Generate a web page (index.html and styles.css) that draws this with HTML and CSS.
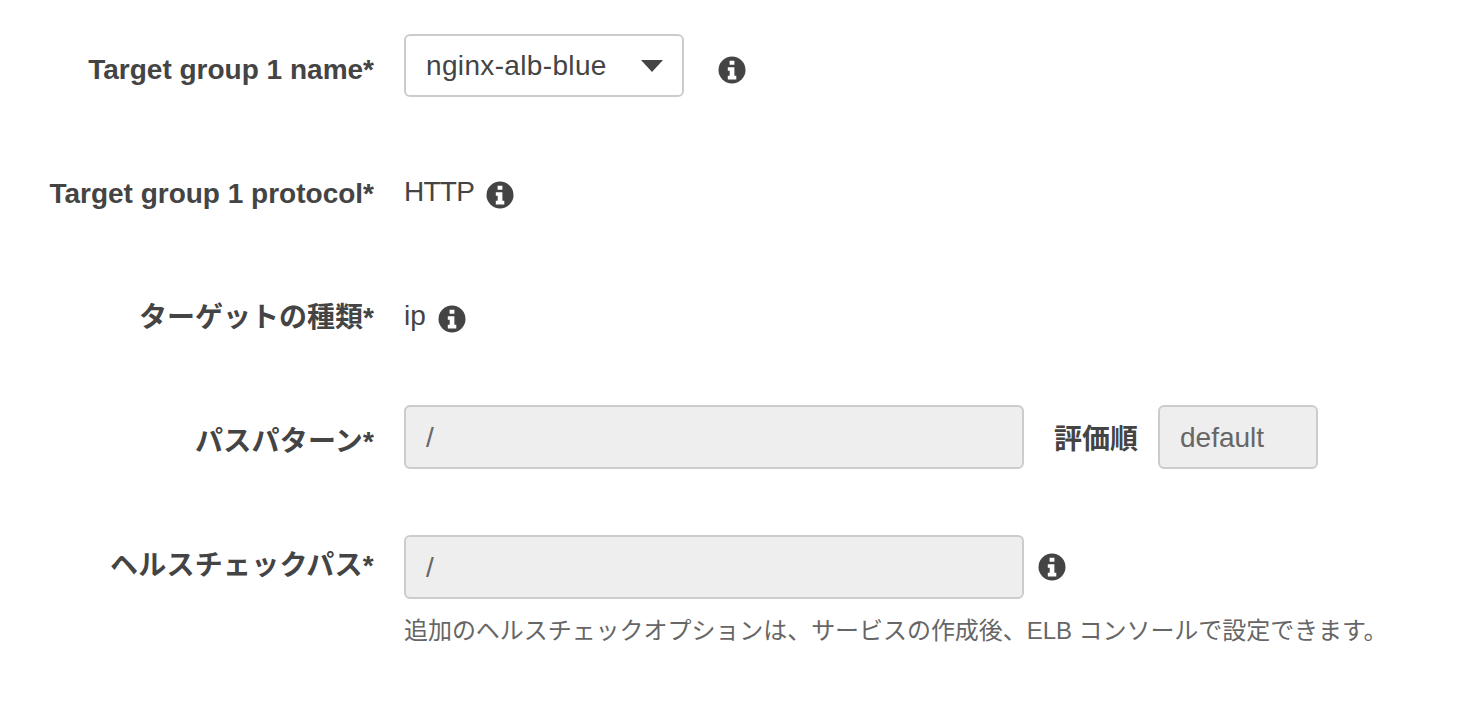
FILE: index.html
```html
<!DOCTYPE html>
<html lang="ja">
<head>
  <meta charset="UTF-8" />
  <title>Target group</title>
  <link rel="stylesheet" href="styles.css">
</head>
<body>
  <svg class="defs" xmlns="http://www.w3.org/2000/svg">
    <symbol id="info" viewBox="0 0 28 28">
      <circle cx="14" cy="14" r="13.5" fill="#444"/>
      <path fill="#fff" d="M11.6 4.8h4.8v4h-4.8z M9.8 11.2h6.6v8.6h1.9v3.6H9.8v-3.6h1.9v-5H9.8z"/>
    </symbol>
  </svg>

  <div class="form">
    <div class="row row-name">
      <label class="label">Target group 1 name*</label>
      <div class="select">
        <span class="select-text">nginx-alb-blue</span>
        <span class="caret"></span>
      </div>
      <svg class="info info-far"><use href="#info"/></svg>
    </div>

    <div class="row row-protocol">
      <label class="label">Target group 1 protocol*</label>
      <span class="value value-http">HTTP</span>
      <svg class="info"><use href="#info"/></svg>
    </div>

    <div class="row row-type">
      <label class="label">ターゲットの種類*</label>
      <span class="value">ip</span>
      <svg class="info"><use href="#info"/></svg>
    </div>

    <div class="row row-path">
      <label class="label">パスパターン*</label>
      <div class="input input-wide">/</div>
      <span class="order-label">評価順</span>
      <div class="input input-small">default</div>
    </div>

    <div class="row row-health">
      <label class="label">ヘルスチェックパス*</label>
      <div class="input input-wide">/</div>
      <svg class="info"><use href="#info"/></svg>
    </div>
    <p class="help">追加のヘルスチェックオプションは、サービスの作成後、ELB コンソールで設定できます。</p>
  </div>
</body>
</html>
```

FILE: styles.css
```css
body {
  margin: 0;
  background: #fff;
  color: #444;
  font-family: "Liberation Sans", "Noto Sans CJK JP", sans-serif;
  font-size: 28px;
}
.defs {
  display: none;
}
.form {
  padding-top: 34px;
}
.row {
  display: flex;
  align-items: center;
  height: 63px;
}
.label {
  width: 374px;
  margin-right: 30px;
  text-align: right;
  font-weight: bold;
  flex-shrink: 0;
}
.row-name .label {
  margin-top: 8px;
}
.row-name .info {
  margin-top: 8px;
}
.row-protocol {
  margin-top: 61px;
}
.row-protocol .label {
  margin-top: 8px;
}
.row-type {
  margin-top: 61px;
}
.row-type .label {
  margin-top: 2px;
}
.row-protocol .value,
.row-type .value {
  margin-top: 4px;
}
.row-protocol .info,
.row-type .info {
  margin-top: 10px;
  margin-left: 12px;
}
.row-path {
  margin-top: 60px;
}
.row-path .label {
  margin-top: 4px;
  letter-spacing: 0.2px;
}
.row-health {
  margin-top: 67px;
}
.row-health .label {
  margin-bottom: 8px;
  letter-spacing: 0.25px;
}
.row-health .info {
  margin-left: 14px;
}
.value-http {
  letter-spacing: -0.75px;
}
.select {
  display: flex;
  align-items: center;
  justify-content: space-between;
  box-sizing: border-box;
  width: 280px;
  height: 63px;
  padding: 0 19px 0 20px;
  border: 2px solid #ccc;
  border-radius: 6px;
}
.select-text {
  letter-spacing: 0.35px;
}
.caret {
  border-left: 11px solid transparent;
  border-right: 11px solid transparent;
  border-top: 12px solid #444;
}
.input {
  box-sizing: border-box;
  height: 64px;
  padding: 0 20px;
  border: 2px solid #ccc;
  border-radius: 6px;
  background: #eee;
  color: #666;
  line-height: 62px;
}
.input-wide {
  width: 620px;
}
.input-small {
  width: 160px;
}
.order-label {
  margin: 0 20px 0 30px;
  font-weight: bold;
}
.info {
  width: 28px;
  height: 28px;
  margin-left: 13px;
}
.row-name .info-far {
  margin-left: 34px;
}
.help {
  margin: 13px 0 0 404px;
  color: #666;
  font-size: 24px;
  letter-spacing: -0.05px;
}
```
